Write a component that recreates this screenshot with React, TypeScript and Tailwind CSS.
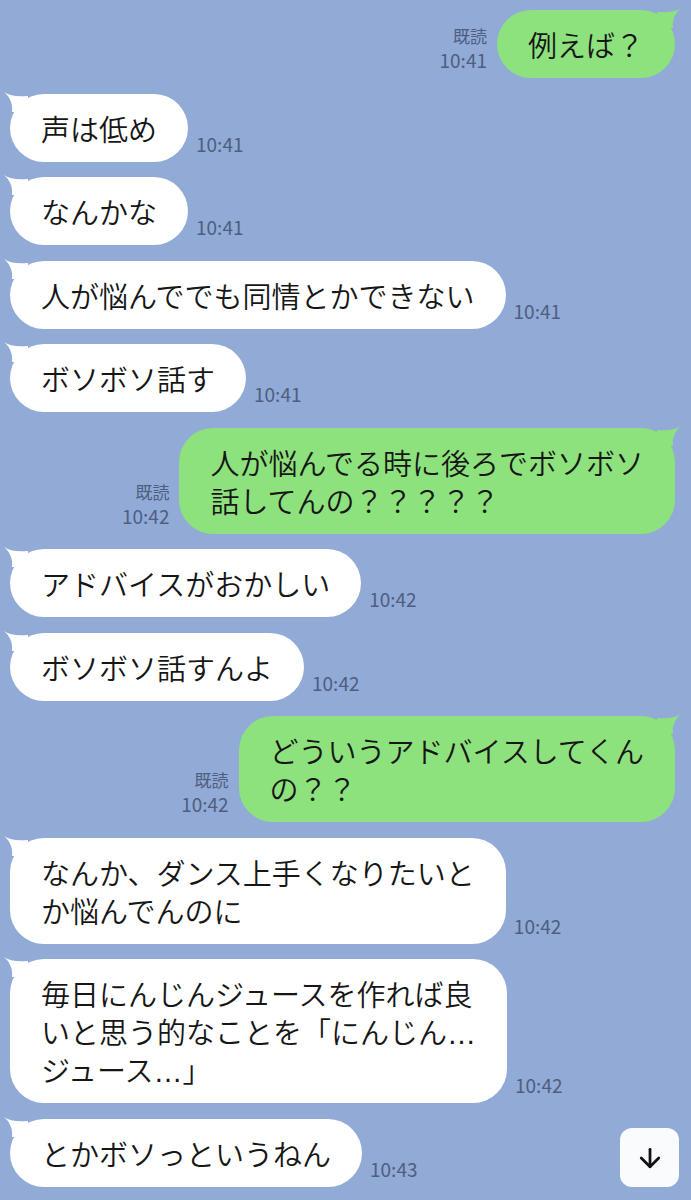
import { ArrowDown } from "lucide-react";

type Msg = {
  side: "left" | "right";
  lines: string[];
  time: string;
};

const messages: Msg[] = [
  { side: "right", lines: ["例えば？"], time: "10:41" },
  { side: "left", lines: ["声は低め"], time: "10:41" },
  { side: "left", lines: ["なんかな"], time: "10:41" },
  { side: "left", lines: ["人が悩んででも同情とかできない"], time: "10:41" },
  { side: "left", lines: ["ボソボソ話す"], time: "10:41" },
  { side: "right", lines: ["人が悩んでる時に後ろでボソボソ", "話してんの？？？？？"], time: "10:42" },
  { side: "left", lines: ["アドバイスがおかしい"], time: "10:42" },
  { side: "left", lines: ["ボソボソ話すんよ"], time: "10:42" },
  { side: "right", lines: ["どういうアドバイスしてくん", "の？？"], time: "10:42" },
  { side: "left", lines: ["なんか、ダンス上手くなりたいと", "か悩んでんのに"], time: "10:42" },
  {
    side: "left",
    lines: ["毎日にんじんジュースを作れば良", "いと思う的なことを「にんじん…", "ジュース…」"],
    time: "10:42",
  },
  { side: "left", lines: ["とかボソっというねん"], time: "10:43" },
];

const font = { fontFamily: '"Noto Sans CJK JP", "Noto Sans", sans-serif' };

// iOS draws the ellipsis on the baseline, the CJK font centres it
function Line({ text }: { text: string }) {
  const parts = text.split("…");
  return (
    <div className="h-[38px] whitespace-nowrap">
      {parts.map((p, i) => (
        <span key={i}>
          {p}
          {i < parts.length - 1 && (
            <span className="leading-none" style={{ fontFamily: '"Liberation Sans", sans-serif' }}>
              …
            </span>
          )}
        </span>
      ))}
    </div>
  );
}

function Tail({ side, color }: { side: "left" | "right"; color: string }) {
  if (side === "left") {
    return (
      <svg className="absolute -left-[6px] -top-[2px]" width="24" height="20" viewBox="0 0 24 20">
        <path d="M0 0 C6 4 13 5 24 4 L24 20 L8 20 C9 12 6 5 0 0 Z" fill={color} />
      </svg>
    );
  }
  return (
    <svg className="absolute -right-[6px] -top-[2px]" width="24" height="20" viewBox="0 0 24 20">
      <path d="M24 0 C18 4 11 5 0 4 L0 20 L16 20 C15 12 18 5 24 0 Z" fill={color} />
    </svg>
  );
}

function Bubble({ msg }: { msg: Msg }) {
  const isLeft = msg.side === "left";
  const color = isLeft ? "#ffffff" : "#8de27d";
  return (
    <div className="relative">
      <Tail side={msg.side} color={color} />
      <div
        className={`relative rounded-[34px] px-[31px] py-[15px] text-[29px] font-[350] leading-[38px] text-[#161616] ${
          isLeft ? "bg-white" : "bg-[#8de27d]"
        }`}
      >
        {msg.lines.map((l, i) => (
          <Line key={i} text={l} />
        ))}
      </div>
    </div>
  );
}

function Row({ msg }: { msg: Msg }) {
  if (msg.side === "left") {
    return (
      <div className="flex items-end gap-[8px] pl-[10px]">
        <Bubble msg={msg} />
        <span className="pb-[6px] text-[19px] leading-[24px] text-[#4d5f80]">{msg.time}</span>
      </div>
    );
  }
  return (
    <div className="flex items-end justify-end gap-[10px] pr-[16px]">
      <div className="flex flex-col items-end pb-[6px] text-[17px] leading-[24px] text-[#4d5f80]">
        <span>既読</span>
        <span className="text-[19px]">{msg.time}</span>
      </div>
      <Bubble msg={msg} />
    </div>
  );
}

export default function App() {
  return (
    <div className="relative h-[1200px] w-[691px] overflow-hidden bg-[#92aad6]" style={font}>
      <div className="flex flex-col gap-[15.5px] pt-[10px]">
        {messages.map((m, i) => (
          <Row key={i} msg={m} />
        ))}
      </div>
      <button
        className="absolute left-[620px] top-[1128px] flex h-[59px] w-[59px] items-center justify-center rounded-[12px] bg-[#fafbfd]"
        aria-label="Scroll down"
      >
        <ArrowDown size={30} strokeWidth={2.2} color="#111111" />
      </button>
    </div>
  );
}
